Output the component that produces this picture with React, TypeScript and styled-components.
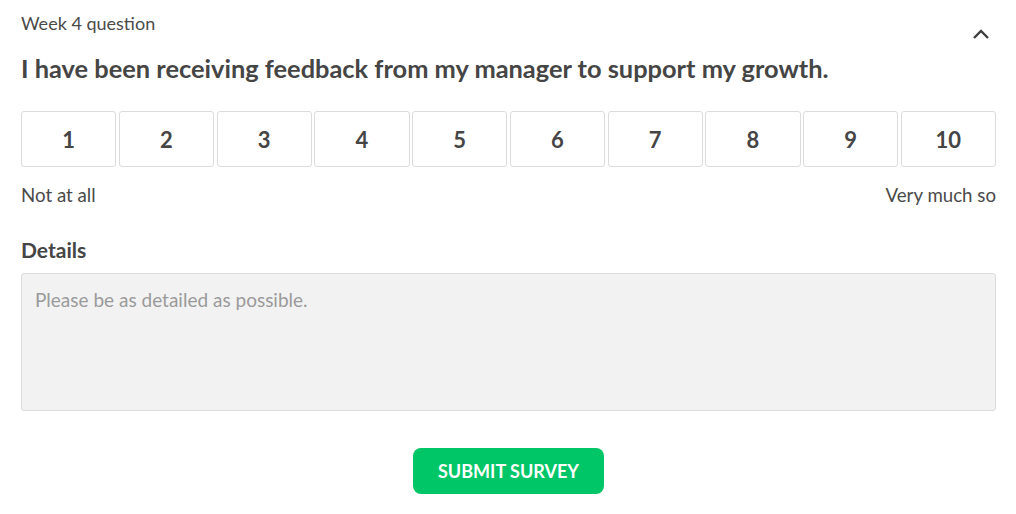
import React from "react";
import styled, { createGlobalStyle } from "styled-components";

const Global = createGlobalStyle`
  html, body { margin: 0; padding: 0; background: #fff; }
  body { font-family: "Lato", "Open Sans", sans-serif; color: #454545; }
  * { box-sizing: border-box; }
`;

const Page = styled.div`
  padding: 12px 20px 20px 21px;
  display: flex;
  flex-direction: column;
`;

const Header = styled.div`
  display: flex;
  justify-content: space-between;
  align-items: flex-start;
`;

const HeaderText = styled.div`
  display: flex;
  flex-direction: column;
`;

const Eyebrow = styled.div`
  font-size: 18px;
  line-height: 22px;
  color: #4a4a4a;
`;

const Question = styled.h1`
  margin: 19px 0 0;
  font-size: 25.4px;
  line-height: 30px;
  font-weight: 700;
  color: #454545;
`;

const Toggle = styled.button`
  border: 0;
  background: none;
  padding: 0;
  margin: 15px 5px 0 0;
  width: 20px;
  height: 14px;
  display: flex;
  align-items: center;
  justify-content: center;
  cursor: pointer;
`;

const Scale = styled.div`
  margin-top: 28px;
  display: grid;
  grid-template-columns: repeat(10, 1fr);
  column-gap: 2.5px;
`;

const ScaleButton = styled.button`
  height: 56px;
  border: 1px solid #dcdcdc;
  border-radius: 3px;
  background: #fff;
  font-family: "Lato", sans-serif;
  font-size: 22px;
  font-weight: 700;
  color: #454545;
  cursor: pointer;
`;

const Legend = styled.div`
  margin-top: 17px;
  display: flex;
  justify-content: space-between;
  font-size: 18.7px;
  line-height: 22px;
  color: #4a4a4a;
`;

const Label = styled.div`
  margin-top: 32px;
  font-size: 21px;
  line-height: 24px;
  font-weight: 700;
  color: #454545;
`;

const TextArea = styled.textarea`
  margin-top: 11px;
  height: 138px;
  resize: none;
  background: #f2f2f2;
  border: 1px solid #dcdcdc;
  border-radius: 3px;
  padding: 15px 13px;
  font-family: "Lato", sans-serif;
  font-size: 19px;
  line-height: 22px;
  color: #454545;
  &::placeholder { color: #9a9a9a; }
  outline: none;
`;

const Actions = styled.div`
  margin-top: 37px;
  display: flex;
  justify-content: center;
`;

const Submit = styled.button`
  width: 191px;
  height: 46px;
  border: 0;
  border-radius: 8px;
  background: #00c667;
  color: #fff;
  font-family: "Lato", sans-serif;
  font-size: 18px;
  font-weight: 700;
  text-transform: uppercase;
  cursor: pointer;
`;

export default function App() {
  return (
    <>
      <Global />
      <Page>
        <Header>
          <HeaderText>
            <Eyebrow>Week 4 question</Eyebrow>
            <Question>I have been receiving feedback from my manager to support my growth.</Question>
          </HeaderText>
          <Toggle aria-label="Collapse">
            <svg width="18" height="12" viewBox="0 0 18 12">
              <path d="M2 10 L9 3 L16 10" fill="none" stroke="#3f3f3f" strokeWidth="2.4" />
            </svg>
          </Toggle>
        </Header>
        <Scale>
          {Array.from({ length: 10 }, (_, i) => (
            <ScaleButton key={i}>{i + 1}</ScaleButton>
          ))}
        </Scale>
        <Legend>
          <span>Not at all</span>
          <span>Very much so</span>
        </Legend>
        <Label>Details</Label>
        <TextArea placeholder="Please be as detailed as possible." />
        <Actions>
          <Submit>Submit survey</Submit>
        </Actions>
      </Page>
    </>
  );
}
